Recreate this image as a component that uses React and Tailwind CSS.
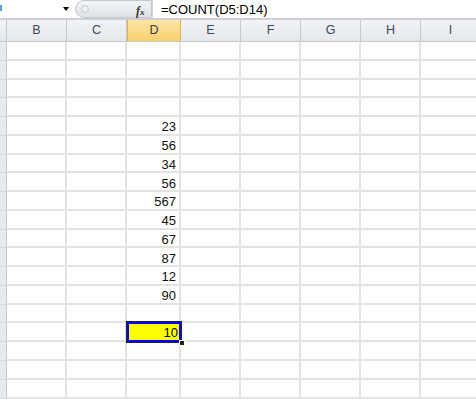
import React from "react";

const cols = ["B", "C", "D", "E", "F", "G", "H", "I"];
const widths = ["w-[60px]", "w-[60px]", "w-[54px]", "w-[60px]", "w-[60px]", "w-[60px]", "w-[60px]", "w-[60px]"];
const values = { 4: "23", 5: "56", 6: "34", 7: "56", 8: "567", 9: "45", 10: "67", 11: "87", 12: "12", 13: "90" };

export default function App() {
  const rows = Array.from({ length: 20 }, (_, i) => i);
  return (
    <div className="w-[476px] h-[399px] overflow-hidden bg-white relative" style={{ fontFamily: '"Liberation Sans", Arial, sans-serif' }}>
      {/* formula bar */}
      <div className="h-[20px] flex items-stretch bg-white border-b-2 border-[#cdd1d6]">
        <div className="w-[75px] flex items-center relative">
          <div className="w-[2px] h-[6px] bg-[#5b9bd5] mt-[-2px]" />
          <div className="ml-auto mr-[6px] w-0 h-0 border-l-[3.5px] border-r-[3.5px] border-t-[4px] border-l-transparent border-r-transparent border-t-black" />
        </div>
        <div className="w-[77px] h-[18px] rounded-l-full bg-gradient-to-b from-[#f3f4f6] to-[#dfe2e6] border border-[#c4c8ce] flex items-center relative">
          <div className="w-[8px] h-[8px] rounded-full border border-[#c7cbd0] bg-[#eef0f2] ml-[5px]" />
          <span className="absolute left-[60px] top-[1px] text-[12px] italic font-bold text-[#333]" style={{ fontFamily: '"Liberation Serif", serif' }}>
            f<span className="text-[9px]">x</span>
          </span>
        </div>
        <div className="flex-1 flex items-center pl-[8px] border-l border-[#d0d4d9] text-[13px] text-black leading-none">
          =COUNT(D5:D14)
        </div>
      </div>
      {/* header row */}
      <div className="flex h-[22px] bg-gradient-to-b from-[#f1f3f6] to-[#e4e7eb] border-b border-[#c5c9ce]">
        <div className="w-[7px] shrink-0 border-r border-[#c5c9ce]" />
        {cols.map((c, i) => (
          <div
            key={c}
            className={`${widths[i]} shrink-0 flex items-center justify-center text-[12.5px] border-r border-[#c5c9ce] ${
              c === "D" ? "bg-gradient-to-b from-[#fde6a6] to-[#f7cf6c] border-l border-l-[#e2b24c] border-r-[#e2b24c] text-[#3b3b3b]" : "text-[#3c4656]"
            }`}
          >
            {c}
          </div>
        ))}
      </div>
      {/* grid */}
      <div className="flex flex-col">
        {rows.map((r) => (
          <div key={r} className="flex h-[18.78px] shrink-0">
            <div className="w-[7px] shrink-0 bg-[#e8ebee] border-r border-[#c5c9ce] border-b border-b-[#d6d9dd]" />
            {cols.map((c, i) => {
              const isSel = c === "D" && r === 15;
              return (
                <div
                  key={c}
                  className={`${widths[i]} shrink-0 border-r-2 border-b-2 border-[#e3e3e3] flex items-center justify-end pr-[3px] pt-[3px] text-[13px] text-[#111] relative`}
                >
                  {c === "D" && values[r] ? values[r] : ""}
                  {isSel && (
                    <div className="absolute left-[-1px] top-[-2px] w-[56px] h-[22px] border border-[#202040] bg-[#0000ff] p-[2px] z-10">
                      <div className="w-full h-full bg-[#ffff00] flex items-center justify-end pr-[1px] text-[13px] text-black">10</div>
                      <div className="absolute right-[-4px] bottom-[-4px] w-[6px] h-[6px] bg-[#202030] border border-white" />
                    </div>
                  )}
                </div>
              );
            })}
          </div>
        ))}
      </div>
    </div>
  );
}
